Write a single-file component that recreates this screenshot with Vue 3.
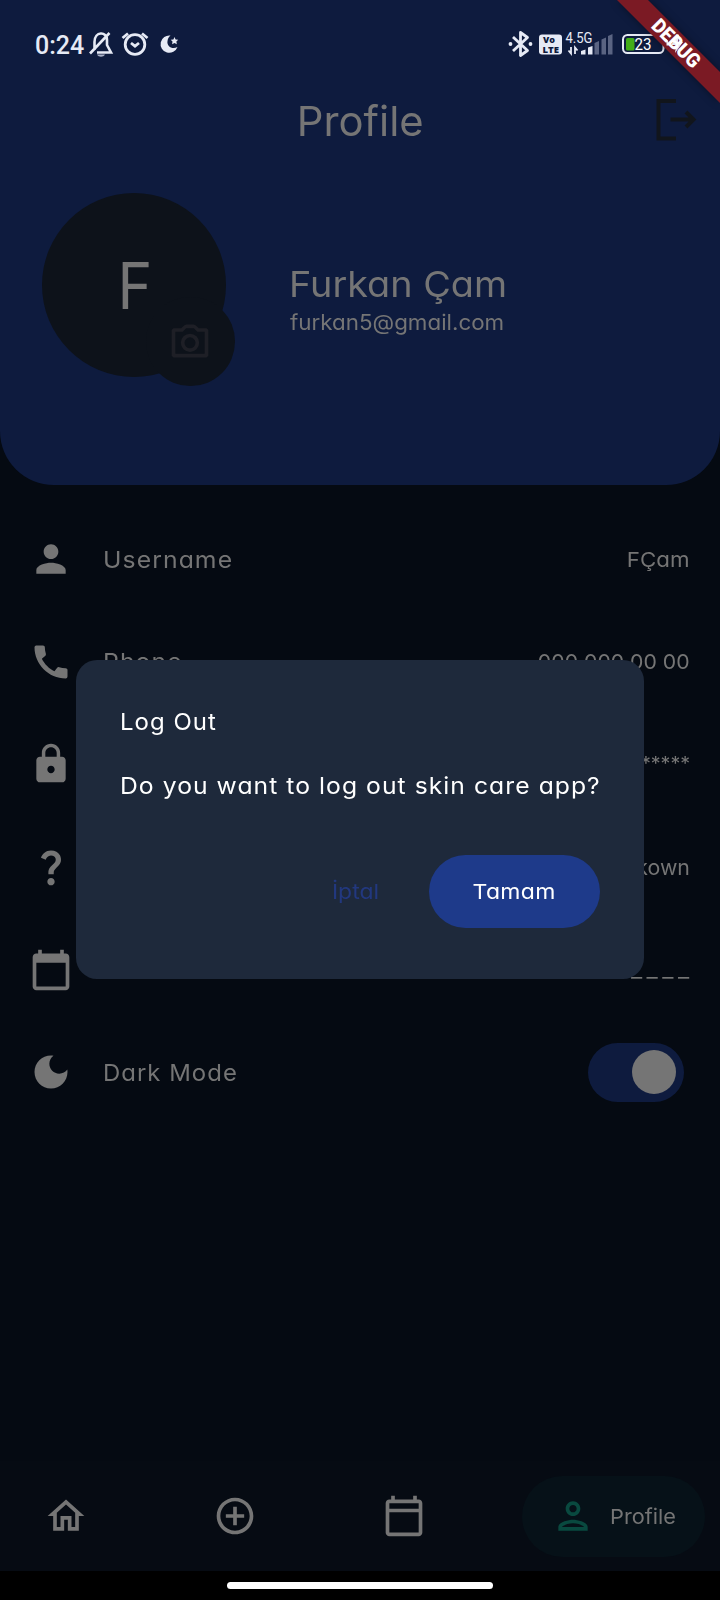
<script setup>
const icons = {
  person: 'M12 12c2.21 0 4-1.79 4-4s-1.79-4-4-4-4 1.79-4 4 1.79 4 4 4zm0 2c-2.67 0-8 1.34-8 4v2h16v-2c0-2.66-5.33-4-8-4z',
  phone: 'M20.01 15.38c-1.23 0-2.42-.2-3.53-.56-.35-.12-.74-.03-1.01.24l-1.57 1.97c-2.83-1.35-5.48-3.9-6.89-6.83l1.95-1.66c.27-.28.35-.67.24-1.02-.37-1.11-.56-2.3-.56-3.53 0-.54-.45-.99-.99-.99H4.19C3.65 3 3 3.24 3 3.99 3 13.28 10.73 21 20.01 21c.71 0 .99-.63.99-1.18v-3.45c0-.54-.45-.99-.99-.99z',
  lock: 'M18 8h-1V6c0-2.76-2.24-5-5-5S7 3.24 7 6v2H6c-1.1 0-2 .9-2 2v10c0 1.1.9 2 2 2h12c1.1 0 2-.9 2-2V10c0-1.1-.9-2-2-2zm-6 9c-1.1 0-2-.9-2-2s.9-2 2-2 2 .9 2 2-.9 2-2 2zm3.1-9H8.9V6c0-1.71 1.39-3.1 3.1-3.1 1.71 0 3.1 1.39 3.1 3.1v2z',
  question: 'M11.07 12.85c.77-1.39 2.25-2.21 3.11-3.44.91-1.29.4-3.7-2.18-3.7-1.69 0-2.52 1.28-2.87 2.34L6.54 6.96C7.25 4.83 9.18 3 11.99 3c2.35 0 3.96 1.07 4.78 2.41.7 1.15 1.11 3.3.03 4.9-1.2 1.77-2.35 2.31-2.97 3.45-.25.46-.35.76-.35 2.24h-2.89c-.01-.78-.13-2.05.48-3.15zM14 20c0 1.1-.9 2-2 2s-2-.9-2-2 .9-2 2-2 2 .9 2 2z',
  calendar: 'M20 3h-1V1h-2v2H7V1H5v2H4c-1.1 0-2 .9-2 2v16c0 1.1.9 2 2 2h16c1.1 0 2-.9 2-2V5c0-1.1-.9-2-2-2zm0 18H4V8h16v13z',
  moon: 'M12 3c-4.97 0-9 4.03-9 9s4.03 9 9 9 9-4.03 9-9c0-.46-.04-.92-.1-1.36-.98 1.37-2.58 2.26-4.4 2.26-2.98 0-5.4-2.42-5.4-5.4 0-1.81.89-3.42 2.26-4.4C12.92 3.04 12.46 3 12 3z',
  home: 'M12 5.69l5 4.5V18h-2v-6H9v6H7v-7.81l5-4.5M12 3L2 12h3v8h6v-6h2v6h6v-8h3L12 3z',
  add: 'M13 7h-2v4H7v2h4v4h2v-4h4v-2h-4V7zm-1-5C6.48 2 2 6.48 2 12s4.48 10 10 10 10-4.48 10-10S17.52 2 12 2zm0 18c-4.41 0-8-3.59-8-8s3.59-8 8-8 8 3.59 8 8-3.59 8-8 8z',
  calendarOutline: 'M20 3h-1V1h-2v2H7V1H5v2H4c-1.1 0-2 .9-2 2v16c0 1.1.9 2 2 2h16c1.1 0 2-.9 2-2V5c0-1.1-.9-2-2-2zm0 18H4V10h16v11zm0-13H4V5h16v3z',
  personOutline: 'M12 6c1.1 0 2 .9 2 2s-.9 2-2 2-2-.9-2-2 .9-2 2-2m0 10c2.7 0 5.8 1.29 6 2H6c.23-.72 3.31-2 6-2m0-12C9.79 4 8 5.79 8 8s1.79 4 4 4 4-1.79 4-4-1.79-4-4-4zm0 10c-2.67 0-8 1.34-8 4v2h16v-2c0-2.66-5.33-4-8-4z',
  camera: 'M20 5h-3.17L15 3.4 14 3h-4l-1 .4L7.17 5H3l-1 1v14l1 1h18l1-1V6l-1-1zm0 14H4V7h4.05l1.83-2h4.24l1.83 2H20zM12 8a5 5 0 1 0 0 10 5 5 0 0 0 0-10zm0 8a3 3 0 1 1 0-6 3 3 0 0 1 0 6z'
}
const rows = [
  { icon: 'person', label: 'Username', value: 'FÇam', cls: 'username' },
  { icon: 'phone', label: 'Phone', value: '000 000 00 00', cls: 'phone' },
  { icon: 'lock', label: '', value: '********', cls: 'password' },
  { icon: 'question', label: '', value: 'Unkown', cls: 'gender' },
  { icon: 'calendar', label: '', value: '__/__/____', cls: 'birthday' }
]
</script>

<template>
  <div class="screen">
    <header class="header">
      <div class="status">
        <span class="clock">0:24</span>
        <svg class="s-left" width="96" height="32" viewBox="86 28 96 32" fill="none" stroke="#e6eaf5" stroke-width="2.6">
          <path d="M94.500 50v-8c0-11 12.500-11 12.500-2v5l4 7.500H97M90 53.500l19.500-20.500" />
          <path d="M97 54.500h8c-1.500 3-6.500 3-8 0z" fill="#a9b0c6" stroke="none" />
          <circle cx="135" cy="44.500" r="9.800" stroke-width="2.800" />
          <path d="M131 43l4 3.200 4-3.200M122.500 38l5.500-4.500M147.500 38l-5.500-4.500" stroke-width="2.800" />
          <path d="M170.500 35.500a8.700 8.700 0 1 0 7 11.500c-5 3-11-.5-10-6 .3-2.500 1.500-4.500 3-5.500z" fill="#e6eaf5" stroke="none" />
          <path d="M174.500 37l1.100 2.500 2.600.2-1.800 1.900.4 2.600-2.300-1.300-2.400 1.300.4-2.600-1.800-1.900 2.700-.2z" fill="#e6eaf5" stroke="none" />
        </svg>
        <svg class="s-right" width="180" height="32" viewBox="506 28 180 32" fill="none" stroke="#e6eaf5">
          <path d="M513 37l14.500 13.500-7 5V32.500l7 5L513 51" stroke-width="2.800" stroke-linejoin="round" />
          <circle cx="510.500" cy="44" r="1.900" fill="#e6eaf5" stroke="none" />
          <circle cx="530.500" cy="44" r="1.900" fill="#e6eaf5" stroke="none" />
          <rect x="539" y="34.500" width="23" height="20" rx="3" fill="#e6eaf5" stroke="none" />
          <text x="543" y="43.300" class="volte" textLength="12" lengthAdjust="spacingAndGlyphs">Vo</text>
          <text x="542.500" y="52.500" class="volte" textLength="16.500" lengthAdjust="spacingAndGlyphs">LTE</text>
          <text x="565.500" y="43" class="net" textLength="27" lengthAdjust="spacingAndGlyphs">4.5G</text>
          <path d="M571 47v6.500l-2.500-3M575 54v-6.500l2.500 3" stroke-width="1.800" />
          <path d="M581 54.500v-3.500l4.500-1.500v5zM588 54.500v-7l4.500-1.500v8.500z" fill="#e6eaf5" stroke="none" />
          <path d="M594.500 54.500V43l4.500-2v13.500zM601.500 54.500V39.500l4.500-2v17zM608 54.500V36l4.500-2v20.500z" fill="#5a6482" stroke="none" />
          <rect x="623" y="35" width="40.500" height="18" rx="4.500" stroke-width="2" />
          <rect x="626" y="38" width="8.500" height="12.500" rx="1.500" fill="#42ad18" stroke="none" />
          <text x="634.500" y="50" class="bat" textLength="17" lengthAdjust="spacingAndGlyphs">23</text>
        </svg>
      </div>
      <div class="topbar">
        <h1 class="title">Profile</h1>
        <svg class="logout" width="44" height="46" viewBox="0 0 44 46" fill="none" stroke="#11151c" stroke-width="4">
          <path d="M22 4H4.500v37.500H22M16.500 22.500h23M32 15l7.500 7.500-7.500 7.500" />
        </svg>
      </div>
      <div class="identity">
        <div class="avatar">
          <span class="initial">F</span>
          <div class="camera">
            <svg width="44" height="44" viewBox="0 0 24 24"><path fill-rule="evenodd" :d="icons.camera" /></svg>
          </div>
        </div>
        <div class="who">
          <div class="name">Furkan Çam</div>
          <div class="email">furkan5@gmail.com</div>
        </div>
      </div>
    </header>

    <main class="list">
      <div v-for="r in rows" :key="r.icon" class="row">
        <svg class="icon" viewBox="0 0 24 24"><path :d="icons[r.icon]" /></svg>
        <span v-if="r.label" class="label">{{ r.label }}</span>
        <span class="value" :class="r.cls">{{ r.value }}</span>
      </div>
      <div class="row">
        <svg class="icon" viewBox="0 0 24 24"><path :d="icons.moon" /></svg>
        <span class="label dark">Dark Mode</span>
        <span class="switch"><i></i></span>
      </div>
    </main>

    <nav class="nav">
      <svg class="icon" viewBox="0 0 24 24"><path :d="icons.home" /></svg>
      <svg class="icon" viewBox="0 0 24 24"><path :d="icons.add" /></svg>
      <svg class="icon" viewBox="0 0 24 24"><path :d="icons.calendarOutline" /></svg>
      <div class="active">
        <svg class="icon" viewBox="0 0 24 24"><path :d="icons.personOutline" /></svg>
        <span>Profile</span>
      </div>
    </nav>
    <div class="gesture"><i></i></div>

    <section class="dialog">
      <h2 class="d-title">Log Out</h2>
      <p class="d-text">Do you want to log out skin care app?</p>
      <div class="actions">
        <span class="cancel">İptal</span>
        <span class="ok"><span>Tamam</span></span>
      </div>
    </section>

    <svg class="banner" width="120" height="120" viewBox="600 0 120 120">
      <path class="ribbon" d="M617 0h31l72 72v31z" fill="#7b1a24" />
      <path d="M665 39.500q3 1 2.500 6" fill="none" stroke="#e6eaf5" stroke-width="2" />
      <path d="M679 34l-8 11h5l-1 8 8-11h-5z" fill="#e6eaf5" />
      <text transform="translate(676 43.500) rotate(45)" y="6.500" text-anchor="middle" textLength="60" lengthAdjust="spacingAndGlyphs">DEBUG</text>
    </svg>
  </div>
</template>

<style>
body { margin: 0; background: #000; }
</style>

<style scoped>
.screen { position: relative; display: flex; flex-direction: column; width: 720px; height: 1600px; overflow: hidden; background: #050a12; color: #757575; font-family: Inter, "Noto Sans", sans-serif; font-feature-settings: "cv11"; }
.screen span, h1, h2, p { white-space: nowrap; }
h1, h2, p { margin: 0; font-weight: 400; }
.header { box-sizing: border-box; height: 485px; padding-top: 28px; background: #0e1b3e; border-radius: 0 0 54px 54px; flex: none; }
.status { display: flex; height: 32px; padding: 0 34px 0 35px; align-items: center; }
.clock { font: 500 25px/32px Roboto, sans-serif; color: #e6eaf5; width: 51px; padding-top: 3px; }
.s-left { flex: none; }
.s-right { margin-left: auto; flex: none; }
.volte { font: 800 8.500px "Open Sans", sans-serif; fill: #0e1a3d; stroke: none; }
.net { font: 400 14px Roboto, sans-serif; fill: #e6eaf5; stroke: none; }
.bat { font: 400 16px Roboto, sans-serif; fill: #fff; stroke: none; }
.topbar { display: grid; grid-template-columns: 1fr auto 1fr; align-items: center; height: 120px; padding-right: 22px; padding-left: 22px; }
.title { grid-column: 2; font-size: 41px; line-height: 50px; padding-top: 1px; transform: scaleX(1.02); }
.logout { justify-self: end; }
.identity { display: flex; padding-left: 42px; margin-top: 13px; }
.avatar { position: relative; width: 184px; height: 184px; border-radius: 50%; background: #0d121a; display: flex; align-items: center; justify-content: center; }
.initial { font-size: 64px; line-height: 80px; padding-top: 2px; margin-left: 1px; transform: scaleX(.92); }
.camera { position: absolute; left: 104px; top: 104px; width: 88.500px; height: 88.500px; border-radius: 50%; background: #0d121a; display: flex; align-items: center; justify-content: center; }
.camera svg { fill: #1e1f26; }
.who { margin-left: 62.500px; padding-top: 68px; }
.name { font-size: 36px; line-height: 46px; transform: scaleX(1.05); transform-origin: 0 50%; }
.email { font-size: 21px; line-height: 32px; transform: scaleX(1.065); transform-origin: 0 50%; margin-left: 1px; }
.list { display: flex; flex-direction: column; padding: 23px 30px 0 29px; flex: 1; }
.row { display: flex; align-items: center; height: 102.600px; }
.icon { width: 44px; height: 44px; fill: #757575; flex: none; }
.label { margin-left: 30px; font-size: 23.500px; letter-spacing: 1px; transform: scaleX(1.055); transform-origin: 0 50%; }
.label.dark { transform: scaleX(1.018); }
.value { margin-left: auto; font-size: 20.500px; transform: scaleX(1.035); transform-origin: 100% 50%; }
.value.username { transform: scaleX(1.09); }
.value.gender { transform: scaleX(1.04); }
.value.password { font-size: 19px; padding-bottom: 2px; }
.value.birthday { transform: scaleX(1.2); letter-spacing: 3.700px; margin-right: -4px; }
.switch { margin-left: auto; width: 96px; height: 59px; border-radius: 30px; background: #0e1b3e; margin-right: 6px; display: flex; align-items: center; justify-content: flex-end; }
.switch i { width: 44px; height: 44px; border-radius: 50%; background: #757575; margin-right: 8px; }
.nav { display: flex; align-items: center; gap: 125px; height: 110px; padding: 0 15px 0 44px; box-sizing: border-box; background: #060b13; flex: none; }
.active { width: 183px; height: 81px; border-radius: 41px; background: #061118; display: flex; align-items: center; box-sizing: border-box; padding-left: 29px; margin-left: -29px; }
.active .icon { fill: #09493f; }
.active span { margin-left: 15px; font-size: 20.500px; transform: scaleX(1.06); transform-origin: 0 50%; }
.gesture { height: 29px; background: #000; display: flex; justify-content: center; flex: none; }
.gesture i { width: 266px; height: 7px; border-radius: 4px; background: #fff; margin-top: 11px; }
.dialog { position: absolute; left: 76px; top: 660px; width: 568px; height: 319px; border-radius: 21px; background: #1e293b; box-sizing: border-box; padding: 46px 44px 0; color: #fff; }
.d-title { font-size: 23.500px; line-height: 32px; letter-spacing: 1px; transform: scaleX(1.02); transform-origin: 0 50%; }
.d-text { font-size: 23.500px; line-height: 32px; margin-top: 32px; letter-spacing: 1px; transform: scaleX(1.05); transform-origin: 0 50%; }
.actions { display: flex; justify-content: flex-end; align-items: center; margin-top: 52.500px; }
.cancel { color: #22387f; font-size: 20.500px; margin-right: 50px; transform: scaleX(1.12); transform-origin: 100% 50%; }
.ok { width: 171px; height: 73.500px; border-radius: 37px; background: #1e3a8a; display: flex; align-items: center; justify-content: center; font-size: 20.500px; }
.ok span { letter-spacing: .3px; transform: scaleX(1.12); }
.banner { position: absolute; top: 0; right: 0; }
.ribbon { filter: drop-shadow(0 0 4px rgba(0, 0, 0, .4)); }
.banner text { font: 900 20px Roboto, sans-serif; fill: #fff; }
</style>
